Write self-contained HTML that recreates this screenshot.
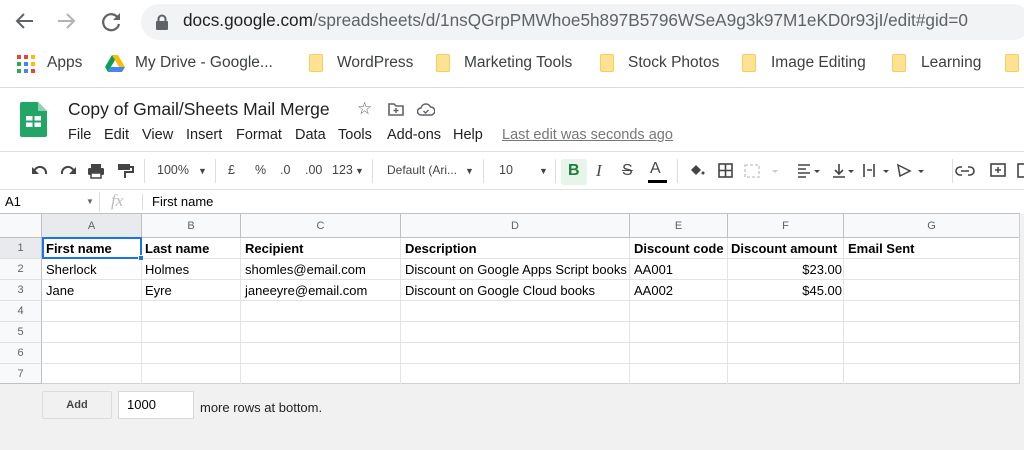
<!DOCTYPE html>
<html><head><style>
*{margin:0;padding:0;box-sizing:border-box}
body{width:1024px;height:450px;overflow:hidden;background:#fff;font-family:"Liberation Sans",Arial,sans-serif;position:relative}
.a{position:absolute;white-space:nowrap}
.ui{font-family:"Liberation Sans",sans-serif}
.bm{font-size:15.5px;color:#3c4043;top:54px}
.fold{position:absolute;top:54px;width:14px;height:18px;background:#fde293;border:1px solid #f6cf58;border-radius:2px}
.menu{font-size:14.5px;color:#202124;top:127px}
.tb{font-size:12.5px;color:#444;top:163px}
.gl{position:absolute;background:#e2e3e3}
.ch{position:absolute;top:214px;height:24px;font-size:11px;color:#5f6368;text-align:center;line-height:24px;background:#f8f9fa;border-right:1px solid #c0c0c0;border-bottom:1px solid #c0c0c0}
.rh{position:absolute;left:0;width:42px;height:21px;font-size:11px;color:#5f6368;text-align:center;line-height:21px;background:#f8f9fa;border-right:1px solid #c0c0c0;border-bottom:1px solid #e0e0e0}
.c{position:absolute;font-size:13px;color:#000;line-height:21px;height:21px}
.b{font-weight:bold}
</style></head><body>
<svg class="a" style="left:14px;top:10px" width="110" height="22" viewBox="0 0 110 22">
<path d="M19 11H3M10 4L3 11l7 7" stroke="#5f6368" stroke-width="2" fill="none"/>
<path d="M44 11h16M53 4l7 7-7 7" stroke="#b0b3b8" stroke-width="2" fill="none"/>
<path d="M104 8a8 8 0 1 0 1 6" stroke="#5f6368" stroke-width="2.2" fill="none"/><path d="M106 3v7h-7z" fill="#5f6368"/>
</svg>
<div class="a" style="left:141px;top:4px;width:890px;height:36px;border-radius:18px;background:#f1f3f4"></div>
<svg class="a" style="left:155px;top:14px" width="14" height="16"><rect x="1" y="7" width="12" height="9" rx="1" fill="#5f6368"/><path d="M3.5 7V5a3.5 3.5 0 0 1 7 0v2" stroke="#5f6368" stroke-width="2" fill="none"/></svg>
<div class="a" style="left:183px;top:10px;font-size:17.2px;color:#5f6368"><span style="color:#202124">docs.google.com</span>/spreadsheets/d/1nsQGrpPMWhoe5h897B5796WSeA9g3k97M1eKD0r93jI/edit#gid=0</div>
<svg class="a" style="left:17px;top:55px" width="18" height="18">
<g><rect x="0" y="0" width="4" height="4" fill="#ea4335"/><rect x="7" y="0" width="4" height="4" fill="#ea4335"/><rect x="14" y="0" width="4" height="4" fill="#fbbc04"/>
<rect x="0" y="7" width="4" height="4" fill="#34a853"/><rect x="7" y="7" width="4" height="4" fill="#4285f4"/><rect x="14" y="7" width="4" height="4" fill="#fbbc04"/>
<rect x="0" y="14" width="4" height="4" fill="#34a853"/><rect x="7" y="14" width="4" height="4" fill="#4285f4"/><rect x="14" y="14" width="4" height="4" fill="#ea4335"/></g></svg>
<div class="a bm" style="left:47px">Apps</div>
<svg class="a" style="left:105px;top:55px" width="20" height="17" viewBox="0 0 20 17"><path d="M7 0h6l7 12h-6z" fill="#fbbc04"/><path d="M7 0L0 12l3 5 7-12z" fill="#0f9d58"/><path d="M3 17h14l3-5H6z" fill="#4285f4"/></svg>
<div class="a bm" style="left:135px">My Drive - Google...</div>
<div class="fold" style="left:309px"></div><div class="a bm" style="left:337px">WordPress</div>
<div class="fold" style="left:436px"></div><div class="a bm" style="left:464px">Marketing Tools</div>
<div class="fold" style="left:600px"></div><div class="a bm" style="left:628px">Stock Photos</div>
<div class="fold" style="left:742px"></div><div class="a bm" style="left:771px">Image Editing</div>
<div class="fold" style="left:892px"></div><div class="a bm" style="left:921px">Learning</div>
<div class="fold" style="left:1005px"></div>
<div class="a" style="left:0;top:87px;width:1024px;height:1px;background:#dadce0"></div>
<svg class="a" style="left:20px;top:102px" width="27" height="35" viewBox="0 0 27 35"><path d="M2 0h16l9 9v24a2 2 0 0 1-2 2H2a2 2 0 0 1-2-2V2a2 2 0 0 1 2-2z" fill="#23a566"/><path d="M18 0v9h9z" fill="#8ed1b1"/><rect x="6" y="14" width="15" height="11" fill="#fff"/><path d="M6 19.5h15M13.5 14v11" stroke="#23a566" stroke-width="2"/></svg>
<div class="a ui" style="left:68px;top:99px;font-size:17.5px;color:#202124">Copy of Gmail/Sheets Mail Merge</div>
<div class="a" style="left:357px;top:99px;font-size:17px;color:#5f6368">☆</div>
<svg class="a" style="left:388px;top:103px" width="16" height="13"><path d="M1 1h5l2 2h7v9H1z" fill="none" stroke="#5f6368" stroke-width="1.6"/><path d="M8 5v5M5.5 7.5h5" stroke="#5f6368" stroke-width="1.4"/></svg>
<svg class="a" style="left:417px;top:103px" width="18" height="13"><path d="M4 12a3.5 3.5 0 0 1 0-7 5 5 0 0 1 9.5-1A4 4 0 0 1 14 12z" fill="none" stroke="#5f6368" stroke-width="1.5"/><path d="M6.5 8l2 2 3-3" stroke="#5f6368" stroke-width="1.4" fill="none"/></svg>
<div class="a ui menu" style="left:68px">File</div>
<div class="a ui menu" style="left:104px">Edit</div>
<div class="a ui menu" style="left:142px">View</div>
<div class="a ui menu" style="left:186px">Insert</div>
<div class="a ui menu" style="left:236px">Format</div>
<div class="a ui menu" style="left:295px">Data</div>
<div class="a ui menu" style="left:338px">Tools</div>
<div class="a ui menu" style="left:387px">Add-ons</div>
<div class="a ui menu" style="left:453px">Help</div>
<div class="a ui menu" style="left:502px;color:#777;text-decoration:underline">Last edit was seconds ago</div>
<div class="a" style="left:0;top:151px;width:1024px;height:1px;background:#e0e0e0"></div>
<svg class="a" style="left:30px;top:163px" width="105" height="16" viewBox="0 0 105 16">
<path d="M4 9a6 6 0 0 1 12 2" stroke="#444" stroke-width="2" fill="none"/><path d="M2 4v7h7z" fill="#444"/>
<path d="M44 9a6 6 0 0 0-12 2" stroke="#444" stroke-width="2" fill="none"/><path d="M46 4v7h-7z" fill="#444"/>
<rect x="58" y="5" width="16" height="7" rx="1.5" fill="#444"/><rect x="61" y="1" width="10" height="4" fill="#444"/><rect x="61" y="10" width="10" height="5" fill="#fff" stroke="#444" stroke-width="1.5"/>
<rect x="88" y="1" width="12" height="6" fill="#444"/><path d="M100 4h3v5h-8v6" stroke="#444" stroke-width="2" fill="none"/>
</svg>
<div class="a" style="left:144px;top:159px;width:1px;height:24px;background:#ddd"></div>
<div class="a tb" style="left:157px">100%</div><div class="a tb" style="left:198px;font-size:9px;top:166px">▼</div>
<div class="a" style="left:215px;top:159px;width:1px;height:24px;background:#ddd"></div>
<div class="a tb" style="left:228px">£</div><div class="a tb" style="left:255px">%</div>
<div class="a tb" style="left:280px">.0</div><div class="a tb" style="left:305px">.00</div><div class="a tb" style="left:332px">123</div><div class="a tb" style="left:355px;font-size:9px;top:166px">▼</div>
<div class="a" style="left:372px;top:159px;width:1px;height:24px;background:#ddd"></div>
<div class="a tb" style="left:387px;font-size:12px">Default (Ari...</div><div class="a tb" style="left:465px;font-size:9px;top:166px">▼</div>
<div class="a" style="left:483px;top:159px;width:1px;height:24px;background:#ddd"></div>
<div class="a tb" style="left:499px">10</div><div class="a tb" style="left:539px;font-size:9px;top:166px">▼</div>
<div class="a" style="left:555px;top:159px;width:1px;height:24px;background:#ddd"></div>
<div class="a" style="left:561px;top:159px;width:26px;height:26px;background:#e6f4ea;border-radius:3px"></div>
<div class="a" style="left:568px;top:162px;font-size:16px;font-weight:bold;color:#188038">B</div>
<div class="a" style="left:596px;top:161px;font-size:17px;font-style:italic;font-family:'Liberation Serif',serif;color:#444">I</div>
<div class="a" style="left:622px;top:162px;font-size:16px;color:#444;text-decoration:line-through">S</div>
<div class="a" style="left:650px;top:160px;font-size:16px;color:#444">A</div>
<div class="a" style="left:648px;top:180px;width:19px;height:3px;background:#000"></div>
<div class="a" style="left:677px;top:159px;width:1px;height:24px;background:#ddd"></div>
<svg class="a" style="left:688px;top:162px" width="300" height="18" viewBox="0 0 300 18">
<path d="M3 8l5-5 5 5-5 5z" fill="#444"/><circle cx="15" cy="11" r="1.5" fill="#444"/>
<rect x="31" y="2" width="13" height="13" fill="none" stroke="#444" stroke-width="1.6"/><path d="M37.5 2v13M31 8.5h13" stroke="#444" stroke-width="1.6"/>
<rect x="57" y="3" width="14" height="12" fill="none" stroke="#ccc" stroke-width="1.5" stroke-dasharray="3 2"/><path d="M84 8l3 3 3-3" fill="#ccc"/>
<path d="M110 3h12M110 7h8M110 11h12M110 15h8" stroke="#444" stroke-width="1.6"/><path d="M126 8l3 3 3-3z" fill="#444"/>
<path d="M151 2v10M147 8l4 4 4-4M145 15h12" stroke="#444" stroke-width="1.6" fill="none"/><path d="M160 8l3 3 3-3z" fill="#444"/>
<path d="M176 2v13M186 2v13M179 8h5" stroke="#444" stroke-width="1.6" fill="none"/><path d="M195 8l3 3 3-3z" fill="#444"/>
<path d="M210 3l12 6-10 5z" fill="none" stroke="#444" stroke-width="1.5"/><path d="M230 8l3 3 3-3z" fill="#444"/>
<path d="M274 5h-2a4 4 0 0 0 0 8h2M280 5h2a4 4 0 0 1 0 8h-2M273 9h8" stroke="#444" stroke-width="1.6" fill="none"/>
</svg>
<div class="a" style="left:952px;top:159px;width:1px;height:24px;background:#ddd"></div>
<svg class="a" style="left:990px;top:162px" width="34" height="18"><rect x="1" y="2" width="14" height="12" fill="none" stroke="#444" stroke-width="1.6"/><path d="M8 5v6M5 8h6" stroke="#444" stroke-width="1.5"/><rect x="28" y="2" width="10" height="13" fill="none" stroke="#444" stroke-width="1.6"/></svg>
<div class="a" style="left:0;top:189px;width:1024px;height:1px;background:#e0e0e0"></div>
<div class="a" style="left:5px;top:194px;font-size:13px;color:#000">A1</div>
<div class="a" style="left:86px;top:197px;font-size:8px;color:#666">▼</div>
<div class="a" style="left:99px;top:192px;width:1px;height:20px;background:#ddd"></div>
<div class="a" style="left:111px;top:191px;font-size:17px;font-style:italic;font-family:'Liberation Serif',serif;color:#bbb">fx</div>
<div class="a" style="left:142px;top:194px;width:1px;height:16px;background:#ddd"></div>
<div class="a" style="left:152px;top:194px;font-size:13px;color:#000">First name</div>
<div class="a" style="left:0;top:384px;width:1024px;height:66px;background:#f1f1f1"></div>
<div class="a" style="left:1020px;top:214px;width:4px;height:236px;background:#f1f1f1"></div>
<div class="a" style="left:0;top:213px;width:1020px;height:1px;background:#c0c0c0"></div>
<div class="ch" style="left:0;width:42px;background:#f8f9fa"></div>
<div class="ch" style="left:42px;width:100px;background:#e8eaed">A</div>
<div class="ch" style="left:142px;width:99px">B</div>
<div class="ch" style="left:241px;width:160px">C</div>
<div class="ch" style="left:401px;width:229px">D</div>
<div class="ch" style="left:630px;width:98px">E</div>
<div class="ch" style="left:728px;width:116px">F</div>
<div class="ch" style="left:844px;width:176px">G</div>
<div class="rh" style="top:238px;background:#e8eaed">1</div>
<div class="rh" style="top:259px">2</div>
<div class="rh" style="top:280px">3</div>
<div class="rh" style="top:301px">4</div>
<div class="rh" style="top:322px">5</div>
<div class="rh" style="top:343px">6</div>
<div class="rh" style="top:364px;height:20px;border-bottom:1px solid #c0c0c0">7</div>
<div class="gl" style="left:42px;top:258px;width:978px;height:1px"></div>
<div class="gl" style="left:42px;top:279px;width:978px;height:1px"></div>
<div class="gl" style="left:42px;top:300px;width:978px;height:1px"></div>
<div class="gl" style="left:42px;top:321px;width:978px;height:1px"></div>
<div class="gl" style="left:42px;top:342px;width:978px;height:1px"></div>
<div class="gl" style="left:42px;top:363px;width:978px;height:1px"></div>
<div class="gl" style="left:42px;top:383px;width:978px;height:1px;background:#d0d0d0"></div>
<div class="gl" style="left:141px;top:238px;width:1px;height:146px"></div>
<div class="gl" style="left:240px;top:238px;width:1px;height:146px"></div>
<div class="gl" style="left:400px;top:238px;width:1px;height:146px"></div>
<div class="gl" style="left:629px;top:238px;width:1px;height:146px"></div>
<div class="gl" style="left:727px;top:238px;width:1px;height:146px"></div>
<div class="gl" style="left:843px;top:238px;width:1px;height:146px"></div>
<div class="gl" style="left:1019px;top:214px;width:1px;height:170px;background:#d0d0d0"></div>
<div class="a" style="left:42px;top:237px;width:100px;height:22px;border:2px solid #1a73e8"></div>
<div class="a" style="left:138px;top:255px;width:6px;height:6px;background:#1a73e8;border:1px solid #fff"></div>
<div class="c b" style="left:46px;top:238px">First name</div>
<div class="c b" style="left:145px;top:238px">Last name</div>
<div class="c b" style="left:245px;top:238px">Recipient</div>
<div class="c b" style="left:405px;top:238px">Description</div>
<div class="c b" style="left:634px;top:238px">Discount code</div>
<div class="c b" style="left:731px;top:238px">Discount amount</div>
<div class="c b" style="left:848px;top:238px">Email Sent</div>
<div class="c" style="left:46px;top:259px">Sherlock</div>
<div class="c" style="left:145px;top:259px">Holmes</div>
<div class="c" style="left:245px;top:259px">shomles@email.com</div>
<div class="c" style="left:405px;top:259px">Discount on Google Apps Script books</div>
<div class="c" style="left:634px;top:259px">AA001</div>
<div class="c" style="left:728px;width:114px;text-align:right;top:259px">$23.00</div>
<div class="c" style="left:46px;top:280px">Jane</div>
<div class="c" style="left:145px;top:280px">Eyre</div>
<div class="c" style="left:245px;top:280px">janeeyre@email.com</div>
<div class="c" style="left:405px;top:280px">Discount on Google Cloud books</div>
<div class="c" style="left:634px;top:280px">AA002</div>
<div class="c" style="left:728px;width:114px;text-align:right;top:280px">$45.00</div>
<div class="a" style="left:42px;top:391px;width:70px;height:28px;background:#f1f1f1;border:1px solid #dcdcdc;border-radius:2px;font-size:11px;color:#444;text-align:center;line-height:26px;font-weight:bold">Add</div>
<div class="a" style="left:118px;top:391px;width:76px;height:28px;background:#fff;border:1px solid #d9d9d9;font-size:13px;padding-left:8px;line-height:26px;color:#000">1000</div>
<div class="a" style="left:200px;top:400px;font-size:13px;color:#222">more rows at bottom.</div>
</body></html>
